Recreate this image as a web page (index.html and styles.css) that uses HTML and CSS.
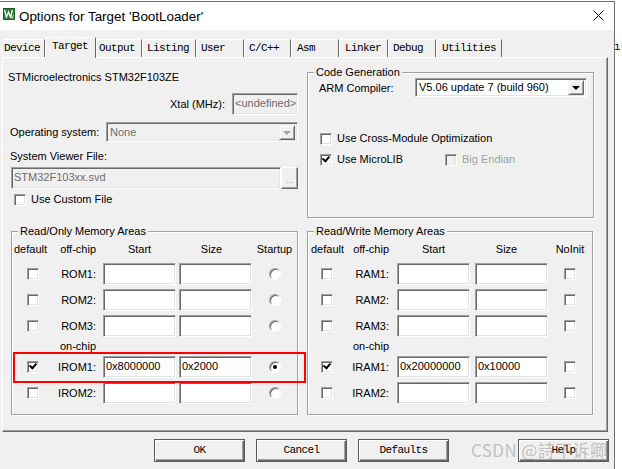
FILE: index.html
```html
<!DOCTYPE html>
<html>
<head>
<meta charset="utf-8">
<title>Options for Target 'BootLoader'</title>
<link rel="stylesheet" href="styles.css">
</head>
<body>
<div class="window">
  <div class="titlebar">
    <svg class="app-icon" width="12" height="12" viewBox="0 0 12 12">
      <rect x="0" y="0" width="12" height="12" fill="#2f7d32"/>
      <rect x="0.5" y="0.5" width="11" height="11" fill="none" stroke="#1b5e20"/>
      <polyline points="1.5,2 3.5,9 5.5,4 7.5,9 9.5,2" fill="none" stroke="#fff" stroke-width="1.3"/>
      <polyline points="8.3,7 9.3,10.5 10.5,7" fill="none" stroke="#c8e6c9" stroke-width="0.9"/>
    </svg>
    <span class="title">Options for Target 'BootLoader'</span>
    <svg class="close" width="11" height="11" viewBox="0 0 11 11">
      <path d="M0.5 0.5 L10.5 10.5 M10.5 0.5 L0.5 10.5" stroke="#000" stroke-width="1" fill="none"/>
    </svg>
  </div>
  <div class="client">
    <div class="tabs">
      <div class="tab tab-device">Device</div>
      <div class="tab tab-target active">Target</div>
      <div class="tab tab-output">Output</div>
      <div class="tab tab-listing">Listing</div>
      <div class="tab tab-user">User</div>
      <div class="tab tab-cc">C/C++</div>
      <div class="tab tab-asm">Asm</div>
      <div class="tab tab-linker">Linker</div>
      <div class="tab tab-debug">Debug</div>
      <div class="tab tab-util">Utilities</div>
    </div>
    <div class="panel">
      <div class="top">
        <div class="device-col">
          <div class="device-name">STMicroelectronics STM32F103ZE</div>
          <div class="xtal-row">
            <span>Xtal (MHz):</span>
            <span class="field disabled xtal">&lt;undefined&gt;</span>
          </div>
          <div class="os-row">
            <span class="os-label">Operating system:</span>
            <span class="combo disabled os-combo"><span class="combo-text">None</span><span class="drop disabled"></span></span>
          </div>
          <div class="svf-label">System Viewer File:</div>
          <div class="svf-row">
            <span class="field disabled svf">STM32F103xx.svd</span>
            <span class="browse">...</span>
          </div>
          <div class="check-row custom">
            <span class="cb"></span><span>Use Custom File</span>
          </div>
        </div>
        <fieldset class="group codegen">
          <legend>Code Generation</legend>
          <div class="compiler-row">
            <span class="compiler-label">ARM Compiler:</span>
            <span class="combo compiler-combo"><span class="combo-text">V5.06 update 7 (build 960)</span><span class="drop"></span></span>
          </div>
          <div class="check-row opt1">
            <span class="cb"></span><span>Use Cross-Module Optimization</span>
          </div>
          <div class="opt2">
            <div class="check-row microlib">
              <span class="cb checked"></span><span>Use MicroLIB</span>
            </div>
            <div class="check-row is-disabled">
              <span class="cb disabled"></span><span>Big Endian</span>
            </div>
          </div>
        </fieldset>
      </div>
      <div class="bottom">
        <fieldset class="group mem rom">
          <legend>Read/Only Memory Areas</legend>
          <div class="mem-grid">
            <span class="hd hd-default">default</span>
            <span class="hd mlabel">off-chip</span>
            <span class="hd hd-center">Start</span>
            <span class="hd hd-center hd-size">Size</span>
            <span class="hd hd-center">Startup</span>

            <span class="cb"></span><span class="mlabel">ROM1:</span><span class="field"></span><span class="field size"></span><span class="radio"></span>
            <span class="cb"></span><span class="mlabel">ROM2:</span><span class="field"></span><span class="field size"></span><span class="radio"></span>
            <span class="cb"></span><span class="mlabel">ROM3:</span><span class="field"></span><span class="field size"></span><span class="radio"></span>
            <span></span><span class="mlabel">on-chip</span><span></span><span></span><span></span>
            <span class="cb checked"></span><span class="mlabel">IROM1:</span><span class="field">0x8000000</span><span class="field size">0x2000</span><span class="radio checked"></span>
            <span class="cb"></span><span class="mlabel">IROM2:</span><span class="field"></span><span class="field size"></span><span class="radio"></span>
          </div>
        </fieldset>
        <fieldset class="group mem ram">
          <legend>Read/Write Memory Areas</legend>
          <div class="mem-grid">
            <span class="hd hd-default">default</span>
            <span class="hd mlabel">off-chip</span>
            <span class="hd hd-center">Start</span>
            <span class="hd hd-center hd-size">Size</span>
            <span class="hd hd-center">NoInit</span>

            <span class="cb"></span><span class="mlabel">RAM1:</span><span class="field"></span><span class="field size"></span><span class="cb end"></span>
            <span class="cb"></span><span class="mlabel">RAM2:</span><span class="field"></span><span class="field size"></span><span class="cb end"></span>
            <span class="cb"></span><span class="mlabel">RAM3:</span><span class="field"></span><span class="field size"></span><span class="cb end"></span>
            <span></span><span class="mlabel">on-chip</span><span></span><span></span><span></span>
            <span class="cb checked"></span><span class="mlabel">IRAM1:</span><span class="field">0x20000000</span><span class="field size">0x10000</span><span class="cb end"></span>
            <span class="cb"></span><span class="mlabel">IRAM2:</span><span class="field"></span><span class="field size"></span><span class="cb end"></span>
          </div>
        </fieldset>
      </div>
    </div>
    <div class="buttons">
      <span class="btn">OK</span>
      <span class="btn">Cancel</span>
      <span class="btn">Defaults</span>
      <span class="btn help">Help</span>
    </div>
  </div>
</div>
<div class="side-strip">ır</div>
<div class="highlight"></div>
<div class="watermark">CSDN @詩不诉卿</div>
</body>
</html>
```

FILE: styles.css
```css
* { box-sizing: border-box; }
html, body { margin: 0; padding: 0; }
body {
  background: #fff;
  font-family: "Liberation Sans", Arial, sans-serif;
  font-size: 11px;
  color: #000;
  display: flex;
  align-items: flex-start;
  height: 469px;
  overflow: hidden;
}

.window {
  width: 615px;
  height: 480px;
  margin-top: 1px;
  border-top: 1px solid #6f6f6f;
  border-right: 1px solid #6f6f6f;
  background: #f0f0f0;
  flex: none;
}

.side-strip {
  font-family: "Liberation Mono", monospace;
  font-size: 11px;
  padding-top: 41px;
  margin-left: -1px;
  white-space: nowrap;
}

/* title bar */
.titlebar {
  height: 28px;
  background: #fff;
  display: flex;
  align-items: center;
  padding-left: 3px;
}
.app-icon { margin-top: -4px; flex: none; }
.title {
  margin-left: 4px;
  font-size: 13.4px;
  color: #000;
}
.close { margin-left: auto; margin-right: 10px; margin-top: -2px; }

/* tabs */
.tabs {
  display: flex;
  align-items: flex-end;
  height: 27px;
  padding-left: 3px;
  font-family: "Liberation Mono", monospace;
  font-size: 11px;
  letter-spacing: -0.6px;
}
.tab {
  height: 18px;
  line-height: 17px;
  padding-left: 4px;
  border-top: 1px solid #fff;
  border-left: 1px solid #fff;
  border-right: 1px solid #696969;
  white-space: nowrap;
  background: #f0f0f0;
}
.tab.active {
  height: 21px;
  margin-bottom: -1px;
  padding-left: 6px;
  line-height: 16px;
  position: relative;
  z-index: 1;
}
.tab-device { width: 42px; padding-left: 1px; border-left: none; }
.tab-target { width: 51px; }
.tab-output { width: 46px; padding-left: 2px; }
.tab-listing { width: 54px; }
.tab-user { width: 48px; }
.tab-cc { width: 47px; }
.tab-asm { width: 48px; padding-left: 5px; }
.tab-linker { width: 49px; padding-left: 5px; }
.tab-debug { width: 48px; }
.tab-util { width: 66px; padding-left: 5px; }

/* panel */
.panel {
  margin-left: 2px;
  width: 606px;
  height: 375px;
  border-top: 1px solid #fff;
  border-left: 1px solid #fff;
  border-right: 1px solid #696969;
  border-bottom: 1px solid #696969;
  box-shadow: inset -1px -1px 0 #a0a0a0;
}

.top {
  display: grid;
  grid-template-columns: 288px 287px;
  column-gap: 9px;
  padding-left: 7px;
  align-items: start;
}

.device-name {
  margin: 13px 0 0 -2px;
  line-height: 13px;
}
.xtal-row {
  display: flex;
  justify-content: flex-end;
  align-items: center;
  gap: 7px;
  margin-top: 9px;
}
.os-row {
  display: flex;
  align-items: center;
  margin-top: 7px;
}
.os-label { width: 96px; }
.svf-label { margin-top: 8px; line-height: 13px; }
.svf-row { display: flex; margin-top: 4px; margin-left: 1px; }
.custom { margin-top: 4px; margin-left: 4px; }

/* form controls */
.field {
  display: block;
  height: 22px;
  background: #fff;
  border: 1px solid;
  border-color: #a0a0a0 #fff #fff #a0a0a0;
  box-shadow: inset 1px 1px 0 #696969, inset -1px -1px 0 #e3e3e3;
  padding: 3px 0 0 2px;
  line-height: 13px;
  white-space: nowrap;
  overflow: hidden;
}
.field.disabled { background: #f0f0f0; color: #6d6d6d; }
.xtal { width: 66px; }
.svf { width: 270px; }

.browse {
  width: 17px;
  height: 22px;
  border: 1px solid;
  border-color: #fff #696969 #696969 #fff;
  box-shadow: inset -1px -1px 0 #a0a0a0;
  color: #a0a0a0;
  text-align: center;
  line-height: 25px;
  font-size: 9px;
}

.combo {
  display: flex;
  align-items: center;
  height: 20px;
  background: #fff;
  border: 1px solid;
  border-color: #a0a0a0 #fff #fff #a0a0a0;
  box-shadow: inset 1px 1px 0 #696969, inset -1px -1px 0 #e3e3e3;
  padding: 0 2px 0 3px;
}
.combo.disabled { background: #f0f0f0; color: #6d6d6d; }
.os-combo { width: 192px; }
.compiler-combo { width: 172px; height: 19px; }
.combo-text { flex: 1; white-space: nowrap; line-height: 13px; }
.drop {
  width: 16px;
  height: 15px;
  background: #f0f0f0;
  border: 1px solid;
  border-color: #f0f0f0 #696969 #696969 #f0f0f0;
  box-shadow: inset 1px 1px 0 #fff, inset -1px -1px 0 #a0a0a0;
  display: flex;
  align-items: center;
  justify-content: center;
}
.drop::after {
  content: "";
  border-left: 4px solid transparent;
  border-right: 4px solid transparent;
  border-top: 4px solid #000;
  margin-top: 1px;
}
.drop.disabled::after { border-top-color: #a0a0a0; }

.check-row {
  display: flex;
  align-items: center;
  gap: 5px;
  height: 13px;
  line-height: 13px;
}
.cb {
  display: block;
  width: 12px;
  height: 12px;
  background: #fff;
  border: 1px solid;
  border-color: #a0a0a0 #fff #fff #a0a0a0;
  box-shadow: inset 1px 1px 0 #696969, inset -1px -1px 0 #e3e3e3;
  position: relative;
  flex: none;
}
.cb.checked::after {
  content: "";
  position: absolute;
  left: 2px;
  top: 1px;
  width: 5px;
  height: 3px;
  border-left: 2px solid #000;
  border-bottom: 2px solid #000;
  transform: rotate(-50deg);
  transform-origin: 3px 3px;
}
.cb.disabled { background: #f0f0f0; }
.is-disabled { color: #a0a0a0; }

.radio {
  display: block;
  width: 12px;
  height: 12px;
  border-radius: 50%;
  background: #fff;
  border: 1px solid;
  border-color: #a0a0a0 #fff #fff #a0a0a0;
  box-shadow: inset 1px 1px 0 #696969;
  position: relative;
}
.radio.checked::after {
  content: "";
  position: absolute;
  left: 3px;
  top: 3px;
  width: 4px;
  height: 4px;
  border-radius: 50%;
  background: #000;
}

/* group boxes */
fieldset.group {
  margin: 0;
  padding: 0;
  min-width: 0;
  border: 1px solid #a0a0a0;
  box-shadow: 1px 1px 0 #fff, inset 1px 1px 0 #fff;
}
fieldset.group legend {
  margin-left: 6px;
  padding: 0 2px;
  line-height: 13px;
  background: #f0f0f0;
}

fieldset.codegen {
  margin-top: 8px;
  height: 152px;
}
.compiler-row {
  display: flex;
  align-items: center;
  margin-top: -1px;
  padding-left: 11px;
}
.compiler-label { width: 96px; }
.opt1 { margin-top: 35px; padding-left: 12px; }
.opt2 { display: flex; margin-top: 8px; padding-left: 12px; }
.microlib { width: 125px; }

.bottom {
  display: grid;
  grid-template-columns: 287px 286px;
  column-gap: 9px;
  padding-left: 8px;
  margin-top: 7px;
}
fieldset.mem { height: 190px; }
.mem-grid {
  display: grid;
  grid-template-rows: 16px 22px 22px 22px 11px 22px 22px;
  row-gap: 4px;
  align-items: center;
  padding-top: 5px;
}
.rom .mem-grid { grid-template-columns: 37px 54px 73px 76px 1fr; }
.ram .mem-grid { grid-template-columns: 38px 51px 73px 78px 1fr; }

.hd { align-self: start; line-height: 13px; white-space: nowrap; }
.hd-default { padding-left: 2px; }
.ram .hd-default { padding-left: 3px; }
.hd-center { text-align: center; }
.hd-size { padding-right: 5px; }
.mlabel { text-align: right; padding-right: 7px; line-height: 13px; white-space: nowrap; }
.ram .mlabel { padding-right: 8px; }

.mem-grid .cb { margin-left: 15px; }
.ram .mem-grid .cb { margin-left: 13px; }
.mem-grid .cb.end { margin-left: 0; justify-self: center; }
.mem-grid .radio { justify-self: center; }
.mem-grid .field { width: 73px; }
.mem-grid .field.size { justify-self: end; }

/* buttons */
.buttons {
  display: flex;
  gap: 11px;
  margin-top: 7px;
  padding-left: 154px;
  font-family: "Liberation Mono", monospace;
  font-size: 11px;
  letter-spacing: -0.6px;
}
.btn {
  width: 91px;
  height: 23px;
  border: 1px solid #5a5a5a;
  box-shadow: inset 1px 1px 0 #fff, inset -1px -1px 0 #696969, inset -2px -2px 0 #a0a0a0;
  text-align: center;
  line-height: 21px;
  background: #f0f0f0;
}
.help { margin-left: 58px; }

/* overlays */
.highlight {
  position: absolute;
  left: 13px;
  top: 352px;
  width: 293px;
  height: 31px;
  border: 2px solid #f00;
}
.watermark {
  position: absolute;
  left: 471px;
  top: 439px;
  font-family: "Noto Sans CJK SC", "Liberation Sans", sans-serif;
  font-size: 17px;
  letter-spacing: 0.4px;
  line-height: 22px;
  color: rgba(120, 120, 120, 0.42);
  white-space: nowrap;
}
```
